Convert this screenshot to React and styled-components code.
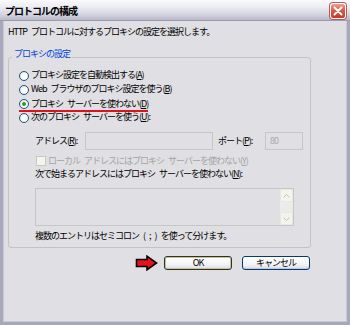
import React from 'react';
import styled, { createGlobalStyle } from 'styled-components';

const GlobalStyle = createGlobalStyle`
  html, body {
    margin: 0;
    padding: 0;
    background: #ffffff;
  }
  body {
    font-family: "Noto Sans CJK JP", "Noto Sans", sans-serif;
    font-size: 9px;
    letter-spacing: -1px;
    word-spacing: 3px;
    color: #000;
  }
`;

const Window = styled.div`
  width: 350px;
  height: 325px;
  display: flex;
  flex-direction: column;
  overflow: hidden;
`;

const TitleBar = styled.div`
  flex: none;
  height: 21px;
  box-sizing: border-box;
  display: flex;
  align-items: center;
  justify-content: space-between;
  padding: 1px 4px 0 5px;
  background: linear-gradient(to bottom, #fbfbfd 0%, #ececf2 35%, #d6d6e2 70%, #b8b8ca 100%);
  border-bottom: 1px solid #9c9cb2;
`;

const Title = styled.span`
  font-size: 10px;
  font-weight: 700;
  line-height: 12px;
`;

const CloseButton = styled.div`
  width: 16px;
  height: 16px;
  box-sizing: border-box;
  border: 1px solid #ffffff;
  border-radius: 3px;
  background: linear-gradient(to bottom, #f0a090 0%, #dc5a48 45%, #c8382a 100%);
  box-shadow: 0 0 0 1px #b85a5a;
  display: flex;
  align-items: center;
  justify-content: center;
`;

const Frame = styled.div`
  flex: 1;
  box-sizing: border-box;
  background: #e0dfe3;
  border: 3px solid #a8a8bc;
  border-top: none;
  box-shadow: inset 1px 0 0 #c8c8d6, inset -1px 0 0 #c8c8d6, inset 0 -1px 0 #c8c8d6;
  padding: 5px 0 0 5px;
`;

const Description = styled.div`
  line-height: 12px;
`;

const Group = styled.fieldset`
  width: 303px;
  box-sizing: border-box;
  margin: 10px 0 0 0;
  padding: 3px 0 6px 10px;
  border: 1px solid #c4c4bc;
  border-radius: 3px;
`;

const Legend = styled.legend`
  color: #0046d5;
  line-height: 12px;
  padding: 0 2px 6px 2px;
  margin-left: -7px;
`;

const RadioRow = styled.div`
  height: 14px;
  display: flex;
  align-items: center;
  gap: 2px;
`;

const Radio = styled.span`
  width: 10px;
  height: 10px;
  box-sizing: border-box;
  border-radius: 50%;
  border: 1px solid #1c5180;
  background: radial-gradient(circle at 60% 60%, #ffffff 30%, #dcdcd6 100%);
  display: flex;
  align-items: center;
  justify-content: center;
  &::after {
    content: "";
    width: 4px;
    height: 4px;
    border-radius: 50%;
    background: ${p => (p.$checked ? '#21a121' : 'transparent')};
  }
`;

const RadioLabel = styled.span`
  line-height: 12px;
  border-bottom: 2px solid ${p => (p.$marked ? '#e0101c' : 'transparent')};
  margin-left: ${p => (p.$marked ? '-12px' : '0')};
  padding-left: ${p => (p.$marked ? '12px' : '0')};
  position: relative;
  top: ${p => (p.$marked ? '1px' : '0')};
`;

const Indent = styled.div`
  margin-left: 16px;
`;

const AddressRow = styled(Indent)`
  margin-top: 7px;
  height: 18px;
  display: flex;
  align-items: center;
`;

const FieldLabel = styled.span`
  width: ${p => p.$w}px;
  margin-left: ${p => p.$ml || 0}px;
  flex: none;
  line-height: 12px;
`;

const TextBox = styled.div`
  width: ${p => p.$w}px;
  height: 18px;
  box-sizing: border-box;
  border: 1px solid #c6c6c6;
  color: #a8a8a8;
  padding: 0 4px;
  line-height: 16px;
  flex: none;
`;

const CheckRow = styled(Indent)`
  margin-top: 5px;
  margin-left: 17px;
  height: 11px;
  line-height: 11px;
  display: flex;
  align-items: center;
  gap: 2px;
  color: #a4a4a4;
`;

const CheckBox = styled.span`
  width: 10px;
  height: 10px;
  box-sizing: border-box;
  border: 1px solid #c8c8c0;
  background: #f4f4f0;
  flex: none;
`;

const Line = styled(Indent)`
  line-height: 11px;
  margin-top: ${p => p.$mt || 0}px;
`;

const ListBox = styled(Indent)`
  margin-top: 9px;
  width: 259px;
  height: 38px;
  box-sizing: border-box;
  border: 1px solid #c6c6c6;
  display: flex;
  justify-content: flex-end;
`;

const ScrollBar = styled.div`
  width: 13px;
  display: flex;
  flex-direction: column;
  justify-content: space-between;
  background: #ebebea;
`;

const ScrollButton = styled.div`
  width: 13px;
  height: 13px;
  box-sizing: border-box;
  border: 1px solid #e8e8e0;
  border-radius: 2px;
  background: #f4f4ec;
  display: flex;
  align-items: center;
  justify-content: center;
`;

const ButtonRow = styled.div`
  width: 303px;
  margin-top: 7px;
  display: flex;
  justify-content: flex-end;
  align-items: center;
  padding-right: 1px;
  box-sizing: border-box;
`;

const Button = styled.div`
  width: 68px;
  height: 14px;
  box-sizing: border-box;
  margin-left: ${p => p.$ml}px;
  border: 1px solid #003c74;
  border-radius: 3px;
  background: linear-gradient(to bottom, #ffffff 0%, #f4f4f6 60%, #dcdce4 100%);
  box-shadow: ${p => (p.$default ? 'inset 0 0 0 1px #f8b848' : 'inset 0 -1px 0 #c4c4d4')};
  display: flex;
  align-items: center;
  justify-content: center;
  line-height: 12px;
`;

const Mn = ({ c }) => <u>{c}</u>;

const ChevronIcon = ({ up }) => (
  <svg width="7" height="4" viewBox="0 0 7 4">
    <polyline
      points={up ? '0.5,3.5 3.5,0.5 6.5,3.5' : '0.5,0.5 3.5,3.5 6.5,0.5'}
      fill="none"
      stroke="#c4c4bc"
      strokeWidth="1"
    />
  </svg>
);

const App = () => (
  <>
    <GlobalStyle />
    <Window>
      <TitleBar>
        <Title>プロトコルの構成</Title>
        <CloseButton>
          <svg width="10" height="10" viewBox="0 0 10 10">
            <path d="M1.5 1.5 L8.5 8.5 M8.5 1.5 L1.5 8.5" stroke="#ffffff" strokeWidth="2" strokeLinecap="round" />
          </svg>
        </CloseButton>
      </TitleBar>
      <Frame>
        <Description>HTTP プロトコルに対するプロキシの設定を選択します。</Description>
        <Group>
          <Legend>プロキシの設定</Legend>
          <RadioRow>
            <Radio />
            <RadioLabel>プロキシ設定を自動検出する(<Mn c="A" />)</RadioLabel>
          </RadioRow>
          <RadioRow>
            <Radio />
            <RadioLabel>Web ブラウザのプロキシ設定を使う(<Mn c="B" />)</RadioLabel>
          </RadioRow>
          <RadioRow>
            <Radio $checked />
            <RadioLabel $marked>プロキシ サーバーを使わない(<Mn c="D" />)</RadioLabel>
          </RadioRow>
          <RadioRow>
            <Radio />
            <RadioLabel>次のプロキシ サーバーを使う(<Mn c="U" />):</RadioLabel>
          </RadioRow>
          <AddressRow>
            <FieldLabel $w={50}>アドレス(<Mn c="R" />):</FieldLabel>
            <TextBox $w={128} />
            <FieldLabel $w={47} $ml={5}>ポート(<Mn c="P" />):</FieldLabel>
            <TextBox $w={38}>80</TextBox>
          </AddressRow>
          <CheckRow>
            <CheckBox />
            <span>ローカル アドレスにはプロキシ サーバーを使わない(<Mn c="Y" />)</span>
          </CheckRow>
          <Line $mt={2}>次で始まるアドレスにはプロキシ サーバーを使わない(<Mn c="N" />):</Line>
          <ListBox>
            <ScrollBar>
              <ScrollButton><ChevronIcon up /></ScrollButton>
              <ScrollButton><ChevronIcon /></ScrollButton>
            </ScrollBar>
          </ListBox>
          <Line $mt={4}>複数のエントリはセミコロン ( ; ) を使って分けます。</Line>
        </Group>
        <ButtonRow>
          <svg width="23" height="16" viewBox="0 0 23 16">
            <polygon points="1.5,4.5 12,4.5 12,1.2 21.5,8 12,14.8 12,11.5 1.5,11.5" fill="#e8101c" stroke="#000" strokeWidth="1.6" strokeLinejoin="miter" />
          </svg>
          <Button $ml={6} $default>OK</Button>
          <Button $ml={10}>キャンセル</Button>
        </ButtonRow>
      </Frame>
    </Window>
  </>
);

export default App;
